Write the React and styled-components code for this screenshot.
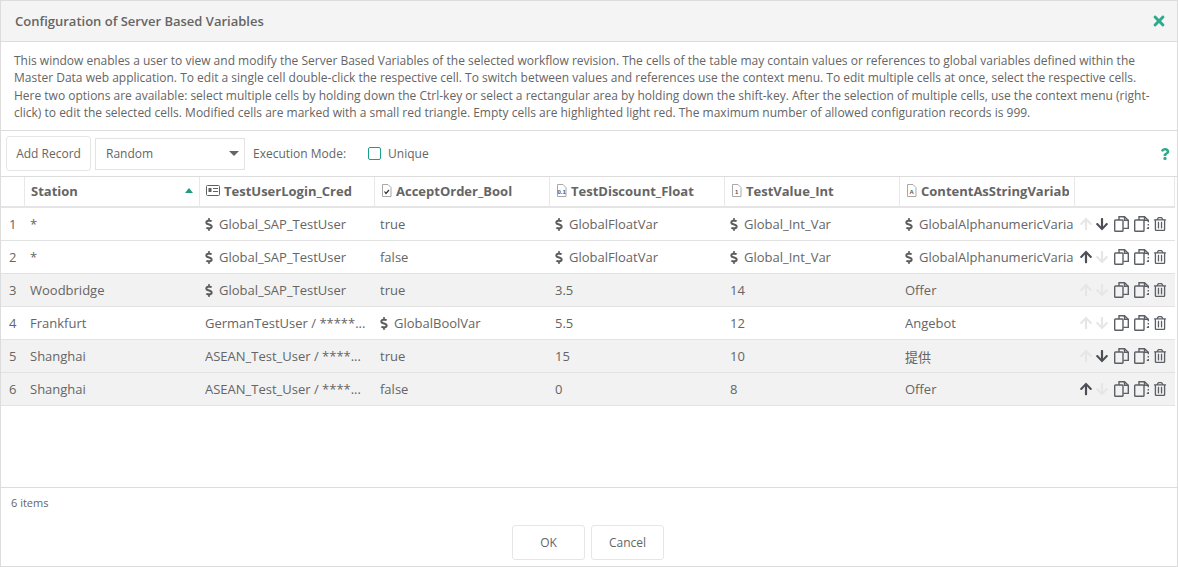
import React from 'react';
import styled, { createGlobalStyle } from 'styled-components';
import { FaDollarSign, FaTimes, FaQuestion, FaArrowUp, FaArrowDown, FaRegTrashAlt } from 'react-icons/fa';

const GlobalStyle = createGlobalStyle`
  html, body { margin: 0; padding: 0; height: 100%; background: #fff; }
  body { font-family: "Open Sans", "Noto Sans CJK SC", sans-serif; font-size: 12px; color: #656565; }
  * { box-sizing: border-box; }
`;

const Dialog = styled.div`
  height: 567px;
  display: flex;
  flex-direction: column;
  border: 1px solid #dcdcdc;
  overflow: hidden;
`;

const Header = styled.header`
  height: 41px;
  flex: none;
  display: flex;
  align-items: center;
  justify-content: space-between;
  padding: 0 10px 0 14px;
  background: #f4f4f4;
  border-bottom: 1px solid #dcdcdc;
`;

const Title = styled.h1`
  margin: 0;
  font-size: 13px;
  font-weight: 600;
  color: #656565;
`;

const Description = styled.p`
  margin: 0;
  flex: none;
  height: 89px;
  padding: 10px 12px 0 13px;
  line-height: 17.3px;
  font-size: 12px;
  border-bottom: 1px solid #dcdcdc;
`;

const Toolbar = styled.div`
  flex: none;
  height: 46px;
  display: flex;
  align-items: center;
  padding: 0 5px;
  border-bottom: 1px solid #dcdcdc;
`;

const Button = styled.button`
  height: 35px;
  width: ${p => p.$wide}px;
  padding: 0;
  background: #fff;
  border: 1px solid #e6e6e6;
  border-radius: 3px;
  font: 12px "Open Sans", sans-serif;
  color: #656565;
`;

const Select = styled.div`
  width: 150px;
  height: 32px;
  margin-left: 4px;
  padding: 0 5px 0 10px;
  display: flex;
  align-items: center;
  justify-content: space-between;
  border: 1px solid #e3e3e3;
`;

const Caret = styled.span`
  width: 0;
  height: 0;
  border-left: 5px solid transparent;
  border-right: 5px solid transparent;
  border-top: 5px solid #656565;
`;

const ModeLabel = styled.span`
  margin-left: 8px;
`;

const CheckLabel = styled.span`
  margin-left: 7px;
`;

const Checkbox = styled.span`
  width: 13px;
  height: 13px;
  margin-left: 22px;
  border: 1px solid #17a085;
  border-radius: 2px;
`;

const Spacer = styled.div`
  flex: 1;
`;

const Help = styled(FaQuestion)`
  color: #2fa98c;
  font-size: 12px;
  margin-right: 1px;
`;

const Close = styled(FaTimes)`
  color: #2fa98c;
  font-size: 16px;
`;

const TableArea = styled.div`
  flex: 1;
  min-height: 0;
  border-bottom: 1px solid #dcdcdc;
`;

const Table = styled.table`
  width: 1174px;
  table-layout: fixed;
  border-collapse: separate;
  border-spacing: 0;
`;

const Th = styled.th`
  height: 31px;
  padding: 0 5px 2px 6px;
  text-align: left;
  font-size: 13px;
  font-weight: 700;
  color: #656565;
  white-space: nowrap;
  overflow: hidden;
  border-bottom: 2px solid #e4e4e4;
  border-right: 1px solid #e8e8e8;
`;

const HeadInner = styled.div`
  display: flex;
  align-items: center;
  gap: 4px;
  overflow: hidden;

  svg {
    flex: none;
  }
`;

const SortArrow = styled.span`
  margin-left: auto;
  margin-right: 1px;
  flex: none;
  width: 0;
  height: 0;
  border-left: 4px solid transparent;
  border-right: 4px solid transparent;
  border-bottom: 5px solid #1f9c80;
`;

const Td = styled.td`
  height: 33px;
  padding: 0 2px 0 5px;
  font-size: 13px;
  white-space: nowrap;
  overflow: hidden;
  background: ${p => p.$shaded ? '#f2f2f2' : '#fff'};
  border-bottom: 1px solid #e2e2e2;
`;

const IndexCell = styled(Td)`
  padding: 0 0 0 8px;
`;

const ActionCell = styled(Td)`
  padding: 0;
`;

const Ref = styled.span`
  display: flex;
  align-items: center;
  gap: 6px;
`;

const Dollar = styled(FaDollarSign)`
  width: 8px;
  height: 13px;
  color: #5c5c5c;
  flex: none;
`;

const Clip = styled.span`
  display: block;
  width: 100%;
  overflow: hidden;
`;

const Actions = styled.div`
  display: flex;
  align-items: center;
  justify-content: flex-end;
  gap: 5px;
  padding-right: 8px;
  color: #5c6066;
`;

const Move = styled.span`
  display: inline-flex;
  font-size: 14px;
  color: ${p => p.$off ? '#e6e6e6' : '#4c5056'};

  & + & {
    margin-left: -3px;
  }
`;

const ActionIcon = styled.span`
  display: inline-flex;
  font-size: 14px;
`;

const TrashIcon = styled(ActionIcon)`
  margin-left: -1px;
`;

const Pager = styled.div`
  flex: none;
  height: 28px;
  padding-left: 10px;
  display: flex;
  align-items: center;
  font-size: 11px;
`;

const Footer = styled.footer`
  flex: none;
  height: 50px;
  padding: 9px 2px 0 0;
  display: flex;
  justify-content: center;
  gap: 6px;
`;

const TypeIcon = ({ mark }) => (
  <svg width="11" height="13" viewBox="0 0 11 13" fill="none">
    <path d="M1.5.5h5.500l3 3v9h-8.500z" stroke="#a8a8a8" fill="#fff" />
    <text x="5.700" y="10" fontSize="6" fontWeight="700" textAnchor="middle" fill="#555" fontFamily="Liberation Sans, sans-serif">{mark}</text>
  </svg>
);

const CredIcon = () => (
  <svg width="14" height="11" viewBox="0 0 14 11" fill="none" stroke="#606060">
    <rect x=".5" y=".5" width="13" height="10" rx="1" />
    <rect x="2.500" y="3" width="3" height="4" fill="#606060" stroke="none" />
    <path d="M7 3.500h5M7 6.500h5" />
  </svg>
);

const BoolIcon = () => (
  <svg width="11" height="13" viewBox="0 0 11 13" fill="none">
    <path d="M1.500.5h5.500l3 3v9h-8.500z" stroke="#a8a8a8" fill="#fff" />
    <path d="M3.500 7.500l1.500 2 3-3.500" stroke="#333" strokeWidth="1.200" />
  </svg>
);

const CopyIcon = () => (
  <svg width="15" height="16" viewBox="0 0 15 16" fill="none" stroke="currentColor" strokeWidth="1.400">
    <path d="M5 4V.7h5.500l3.800 3.500v8.200h-5" />
    <path d="M10.500.7v3.500h3.800" />
    <rect x=".7" y="4" width="8.300" height="11.300" rx=".8" />
  </svg>
);

const PasteIcon = () => (
  <svg width="15" height="16" viewBox="0 0 15 16" fill="none" stroke="currentColor" strokeWidth="1.400">
    <path d="M5 4V.7h5.500l3.800 3.500v2" />
    <path d="M10.500.7v3.500h3.800" />
    <path d="M14.300 8v1.500M14.300 11v1.400h-1.500" />
    <rect x=".7" y="4" width="9.300" height="11.300" rx=".8" />
  </svg>
);

const columns = [
  { name: 'TestUserLogin_Cred', icon: <CredIcon /> },
  { name: 'AcceptOrder_Bool', icon: <BoolIcon /> },
  { name: 'TestDiscount_Float', icon: <TypeIcon mark="0.1" /> },
  { name: 'TestValue_Int', icon: <TypeIcon mark="1" /> },
  { name: 'ContentAsStringVariable', icon: <TypeIcon mark="A" /> },
];

const g = text => ({ ref: true, text });

const rows = [
  { station: '*', cells: [g('Global_SAP_TestUser'), 'true', g('GlobalFloatVar'), g('Global_Int_Var'), g('GlobalAlphanumericVariable')], up: false, down: true },
  { station: '*', cells: [g('Global_SAP_TestUser'), 'false', g('GlobalFloatVar'), g('Global_Int_Var'), g('GlobalAlphanumericVariable')], up: true, down: false },
  { station: 'Woodbridge', shaded: true, cells: [g('Global_SAP_TestUser'), 'true', '3.5', '14', 'Offer'], up: false, down: false },
  { station: 'Frankfurt', cells: ['GermanTestUser / *****...', g('GlobalBoolVar'), '5.5', '12', 'Angebot'], up: false, down: false },
  { station: 'Shanghai', shaded: true, cells: ['ASEAN_Test_User / ****...', 'true', '15', '10', '提供'], up: false, down: true },
  { station: 'Shanghai', shaded: true, cells: ['ASEAN_Test_User / ****...', 'false', '0', '8', 'Offer'], up: true, down: false },
];

export default function App() {
  return (
    <>
      <GlobalStyle />
      <Dialog>
        <Header>
          <Title>Configuration of Server Based Variables</Title>
          <Close />
        </Header>
        <Description>
          This window enables a user to view and modify the Server Based Variables of the selected workflow revision. The cells of the table may contain values or references to global variables defined within the Master Data web application. To edit a single cell double-click the respective cell. To switch between values and references use the context menu. To edit multiple cells at once, select the respective cells. Here two options are available: select multiple cells by holding down the Ctrl-key or select a rectangular area by holding down the shift-key. After the selection of multiple cells, use the context menu (right-click) to edit the selected cells. Modified cells are marked with a small red triangle. Empty cells are highlighted light red. The maximum number of allowed configuration records is 999.
        </Description>
        <Toolbar>
          <Button $wide={85}>Add Record</Button>
          <Select>Random<Caret /></Select>
          <ModeLabel>Execution Mode:</ModeLabel>
          <Checkbox />
          <CheckLabel>Unique</CheckLabel>
          <Spacer />
          <Help />
        </Toolbar>
        <TableArea>
          <Table>
            <colgroup>
              <col width="24" />
              <col width="175" />
              <col width="175" />
              <col width="175" />
              <col width="175" />
              <col width="175" />
              <col width="175" />
              <col width="100" />
            </colgroup>
            <thead>
              <tr>
                <Th />
                <Th><HeadInner>Station<SortArrow /></HeadInner></Th>
                {columns.map(c => (
                  <Th key={c.name}><HeadInner>{c.icon}{c.name}</HeadInner></Th>
                ))}
                <Th />
              </tr>
            </thead>
            <tbody>
              {rows.map((row, i) => (
                <tr key={i}>
                  <IndexCell $shaded={row.shaded}>{i + 1}</IndexCell>
                  <Td $shaded={row.shaded}>{row.station}</Td>
                  {row.cells.map((cell, j) => (
                    <Td key={j} $shaded={row.shaded}>
                      <Clip>
                        {cell.ref ? <Ref><Dollar />{cell.text}</Ref> : cell}
                      </Clip>
                    </Td>
                  ))}
                  <ActionCell $shaded={row.shaded}>
                    <Actions>
                      <Move $off={!row.up}><FaArrowUp /></Move>
                      <Move $off={!row.down}><FaArrowDown /></Move>
                      <ActionIcon><CopyIcon /></ActionIcon>
                      <ActionIcon><PasteIcon /></ActionIcon>
                      <TrashIcon><FaRegTrashAlt /></TrashIcon>
                    </Actions>
                  </ActionCell>
                </tr>
              ))}
            </tbody>
          </Table>
        </TableArea>
        <Pager>6 items</Pager>
        <Footer>
          <Button $wide={73}>OK</Button>
          <Button $wide={73}>Cancel</Button>
        </Footer>
      </Dialog>
    </>
  );
}
